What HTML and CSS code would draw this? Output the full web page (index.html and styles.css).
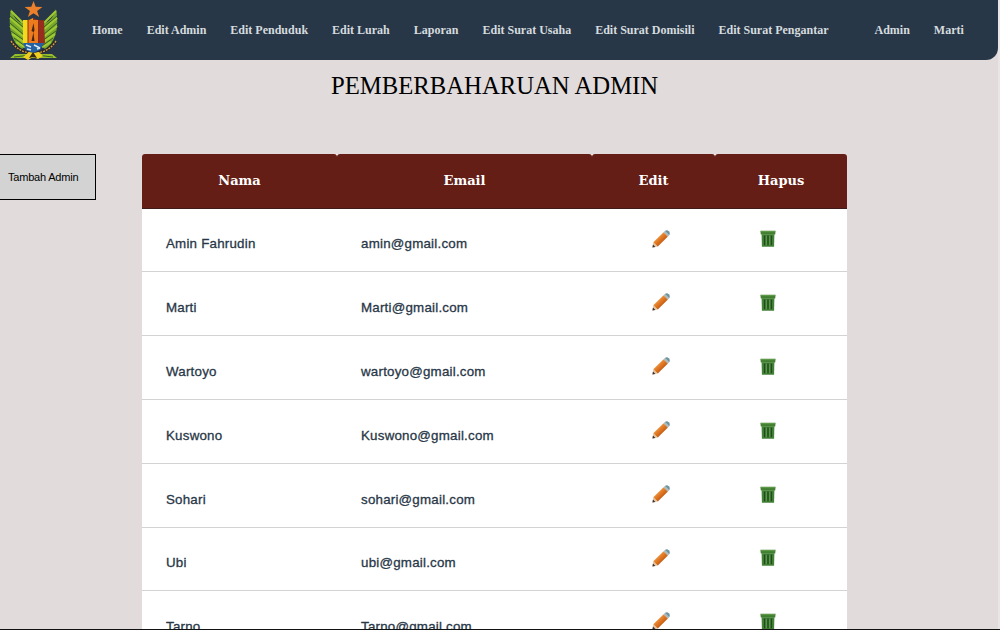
FILE: index.html
```html
<!DOCTYPE html>
<html lang="id">
<head>
<meta charset="utf-8">
<title>Pemberbaharuan Admin</title>
<link rel="stylesheet" href="styles.css">
</head>
<body>
<svg class="sprites" aria-hidden="true">
  <defs>
    <linearGradient id="wood" x1="0" y1="0" x2="1" y2="1"><stop offset=".25" stop-color="#f0a04c"/><stop offset=".5" stop-color="#df7420"/><stop offset=".8" stop-color="#a84b0d"/></linearGradient>
    <symbol id="pencil" viewBox="0 0 18 18">
      <path d="M.4 17.4 1.3 12.3 5.8 16.6Z" fill="#e5c6a0"/>
      <path d="M.4 17.6 1 14.6 3.4 16.9Z" fill="#3c3535"/>
      <path d="M1.3 12.3 11.6 2.3 15.9 6.6 5.8 16.6Z" fill="url(#wood)"/>
      <path d="m11.6 2.3 1.3-1.3 4.3 4.2-1.3 1.4Z" fill="#a9b9bd"/>
      <path d="m12.9 1 .9-.6q1.6-.6 3 .8 1.3 1.3.9 3l-.5 1Z" fill="#6f929e"/>
    </symbol>
    <symbol id="trash" viewBox="0 0 16 17">
      <path d="M.4.7h15.2l-.4 3.8H.8Z" fill="#417f30"/>
      <path d="M1 1h14v1.2H1Z" fill="#5b9848"/>
      <path d="M1.6 4.2h12.8l-.3 12.5H1.9Z" fill="#438237"/>
      <path d="M4.6 5.6v9.6M8 5.6v9.6M11.4 5.6v9.6" stroke="#204b20" stroke-width="1.4"/>
      <path d="M6.3 6v9M9.7 6v9" stroke="#63a34d" stroke-width=".8"/>
    </symbol>
  </defs>
</svg>
<div class="page">
  <header class="navbar">
    <svg class="logo" viewBox="0 0 50 60">
      <g id="wing">
        <path d="M2 9C-1 25 1 41 13 49L20 43 15 24C8 22 4 16 2 9Z" fill="#78a82b"/>
        <path d="m2 11 12 12M1 18l14 12M1 26l14 11M3 34l13 9M7 42l9 5" stroke="#a0c832" stroke-width="2.2"/>
        <path d="m1 16 13 11M1 23l14 12M2 31l14 10M5 38l11 8" stroke="#36621f" stroke-width="1"/>
        <path d="M2 41q7 11 20 12" fill="none" stroke="#2b241d" stroke-width="3"/>
        <path d="M2 41q7 11 20 12" fill="none" stroke="#d0a04b" stroke-width="1.4" stroke-dasharray="2 1"/>
        <path d="m1 58 5-4 16 0 3 4Z" fill="#97bc2c"/>
        <path d="m5 57 17-2" stroke="#325f21"/>
      </g>
      <use href="#wing" transform="translate(49) scale(-1 1)"/>
      <path d="M14 20q6 1 10-2 5 3 11 2l1 23-6 6H20l-6-6Z" fill="#972d1c"/>
      <path d="M14 20q6 1 10-2v26H14Z" fill="#dda219"/>
      <path d="M14 20h5v24h-5Z" fill="#f4d81e"/>
      <path d="M19 20h11v24H19Z" fill="#ed7a1c"/>
      <path d="M19 20v23M29.500 20v23" stroke="#8d2c18"/>
      <path d="m24.500 23-2 8 2 1-2 9h3l-1-8 1-3Z" fill="#472719"/>
      <path d="M14 43h21l-4 7-7 3-7-3Z" fill="#2461a3"/>
      <path d="m17 45 5 2m3-2 6 3m-13 1 4 1m6-1 3-1" stroke="#d8e6ea" stroke-width="1.500"/>
      <path d="m20 52 5 1 5-1 4 4-5 3-5-2-5 3-5-3Z" fill="#edcf20"/>
      <path d="m24 52 4 6-4-1-4 1Z" fill="#372b16"/>
      <path d="m24.500 1 2.200 5.800 6.700.1-5.300 4 2 6.100-5.600-3.800-5.600 3.800 2-6.100-5.300-4 6.700-.1Z" fill="#ed812b"/>
    </svg>
    <nav class="menu">
      <a>Home</a><a>Edit Admin</a><a>Edit Penduduk</a><a>Edit Lurah</a><a>Laporan</a><a>Edit Surat Usaha</a><a>Edit Surat Domisili</a><a>Edit Surat Pengantar</a>
    </nav>
    <nav class="account"><a>Admin</a><a>Marti</a></nav>
  </header>
  <h1 class="title">PEMBERBAHARUAN ADMIN</h1>
  <main class="content">
    <button class="add">Tambah Admin</button>
    <table class="admins">
      <colgroup><col class="c-name"><col class="c-email"><col class="c-edit"><col class="c-delete"></colgroup>
      <thead><tr><th>Nama</th><th>Email</th><th>Edit</th><th>Hapus</th></tr></thead>
      <tbody>
        <tr class="short"><td>Amin Fahrudin</td><td>amin@gmail.com</td><td class="edit"><svg><use href="#pencil"/></svg></td><td class="delete"><svg><use href="#trash"/></svg></td></tr>
        <tr><td>Marti</td><td>Marti@gmail.com</td><td class="edit"><svg><use href="#pencil"/></svg></td><td class="delete"><svg><use href="#trash"/></svg></td></tr>
        <tr><td>Wartoyo</td><td>wartoyo@gmail.com</td><td class="edit"><svg><use href="#pencil"/></svg></td><td class="delete"><svg><use href="#trash"/></svg></td></tr>
        <tr><td>Kuswono</td><td>Kuswono@gmail.com</td><td class="edit"><svg><use href="#pencil"/></svg></td><td class="delete"><svg><use href="#trash"/></svg></td></tr>
        <tr><td>Sohari</td><td>sohari@gmail.com</td><td class="edit"><svg><use href="#pencil"/></svg></td><td class="delete"><svg><use href="#trash"/></svg></td></tr>
        <tr class="short"><td>Ubi</td><td>ubi@gmail.com</td><td class="edit"><svg><use href="#pencil"/></svg></td><td class="delete"><svg><use href="#trash"/></svg></td></tr>
        <tr><td>Tarno</td><td>Tarno@gmail.com</td><td class="edit"><svg><use href="#pencil"/></svg></td><td class="delete"><svg><use href="#trash"/></svg></td></tr>
      </tbody>
    </table>
  </main>
</div>
</body>
</html>
```
FILE: styles.css
```css
* { box-sizing: border-box; }
body { margin: 0; background: #e9e5e6; }
.sprites { display: block; width: 0; height: 0; }
.page { width: 1000px; height: 630px; overflow: hidden; background: linear-gradient(90deg, #e1dbdb 998px, #e9e5e6 998px); border-bottom: 1px solid #111; }
.navbar { display: flex; align-items: center; width: 998px; height: 60px; background: #283747; border-radius: 0 0 12px 0; font: bold 12px "Liberation Serif", serif; color: #d5dbdf; white-space: nowrap; }
.logo { width: 50px; height: 60px; margin-left: 9px; flex: none; }
.menu { display: flex; gap: 24px; margin-left: 33px; }
.account { display: flex; gap: 24px; margin-left: 46px; }
.title { margin: 0; height: 94px; padding: 11px 0 0 331px; font: 24.7px/30px "Liberation Serif", serif; color: #000; white-space: nowrap; }
.content { display: flex; align-items: flex-start; }
.add { width: 96px; height: 46px; padding: 0 8px; border: 1px solid #000; border-left: 0; background: #d3d3d3; font: 11px "Liberation Sans", sans-serif; letter-spacing: -.2px; color: #000; text-align: left; white-space: nowrap; }
.admins { table-layout: fixed; width: 705px; margin-left: 46px; border-spacing: 0; background: #fff; font: 13.33px/16px "Liberation Sans", sans-serif; letter-spacing: .22px; color: #283747; border-radius: 3px 3px 0 0; }
.c-name { width: 195px; }
.c-email { width: 255px; }
.c-edit { width: 123px; }
.c-delete { width: 132px; }
th { height: 55px; padding: 0 0 2px; background: #641e16; border-radius: 3px 3px 0 0; border-bottom: 1px solid #3f1b1a; color: #fff; font: bold 13px "DejaVu Serif", serif; letter-spacing: 0; }
td { height: 64px; padding: 8px 0 0 24px; border-bottom: 1px solid #d3d3d3; -webkit-text-stroke: .3px #283747; }
.short td { height: 63px; }
td svg { display: block; width: 18px; height: 18px; }
td.edit { padding: 0 0 3px 60px; }
td.delete { padding: 0 0 3px 45px; }
.delete svg { width: 16px; height: 17px; }
```
